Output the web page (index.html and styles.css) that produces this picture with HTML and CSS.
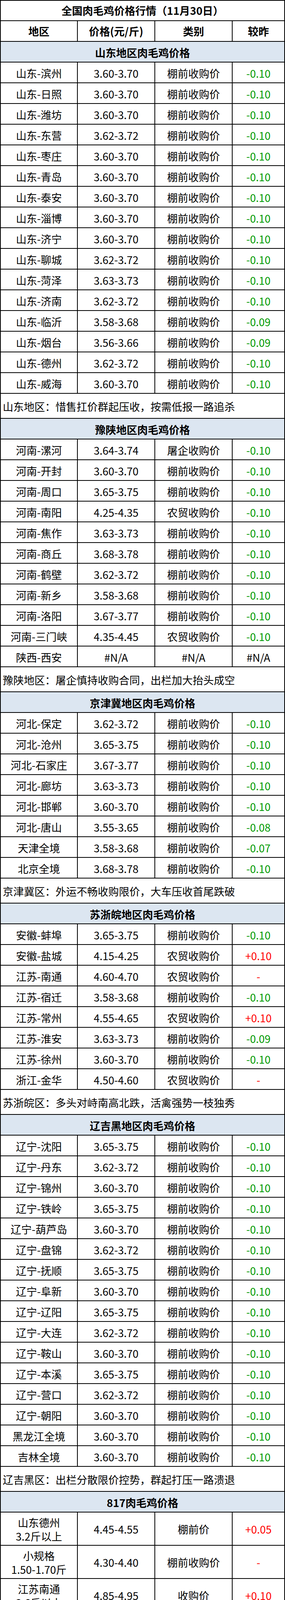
FILE: index.html
```html
<!DOCTYPE html>
<html lang="zh-CN">
<head>
<meta charset="utf-8">
<title>全国肉毛鸡价格行情（11月30日）</title>
<link rel="stylesheet" href="styles.css">
</head>
<body>
<div class="sheet">
  <div class="row full title">全国肉毛鸡价格行情（11月30日）</div>
  <div class="row head"><div class="cell">地区</div><div class="cell">价格(元/斤)</div><div class="cell">类别</div><div class="cell">较昨</div></div>

  <div class="row full section">山东地区肉毛鸡价格</div>
  <div class="row"><div class="cell">山东-滨州</div><div class="cell">3.60-3.70</div><div class="cell">棚前收购价</div><div class="cell dn">-0.10</div></div>
  <div class="row"><div class="cell">山东-日照</div><div class="cell">3.60-3.70</div><div class="cell">棚前收购价</div><div class="cell dn">-0.10</div></div>
  <div class="row"><div class="cell">山东-潍坊</div><div class="cell">3.60-3.70</div><div class="cell">棚前收购价</div><div class="cell dn">-0.10</div></div>
  <div class="row"><div class="cell">山东-东营</div><div class="cell">3.62-3.72</div><div class="cell">棚前收购价</div><div class="cell dn">-0.10</div></div>
  <div class="row"><div class="cell">山东-枣庄</div><div class="cell">3.60-3.70</div><div class="cell">棚前收购价</div><div class="cell dn">-0.10</div></div>
  <div class="row"><div class="cell">山东-青岛</div><div class="cell">3.60-3.70</div><div class="cell">棚前收购价</div><div class="cell dn">-0.10</div></div>
  <div class="row"><div class="cell">山东-泰安</div><div class="cell">3.60-3.70</div><div class="cell">棚前收购价</div><div class="cell dn">-0.10</div></div>
  <div class="row"><div class="cell">山东-淄博</div><div class="cell">3.60-3.70</div><div class="cell">棚前收购价</div><div class="cell dn">-0.10</div></div>
  <div class="row"><div class="cell">山东-济宁</div><div class="cell">3.60-3.70</div><div class="cell">棚前收购价</div><div class="cell dn">-0.10</div></div>
  <div class="row"><div class="cell">山东-聊城</div><div class="cell">3.62-3.72</div><div class="cell">棚前收购价</div><div class="cell dn">-0.10</div></div>
  <div class="row"><div class="cell">山东-菏泽</div><div class="cell">3.63-3.73</div><div class="cell">棚前收购价</div><div class="cell dn">-0.10</div></div>
  <div class="row"><div class="cell">山东-济南</div><div class="cell">3.62-3.72</div><div class="cell">棚前收购价</div><div class="cell dn">-0.10</div></div>
  <div class="row"><div class="cell">山东-临沂</div><div class="cell">3.58-3.68</div><div class="cell">棚前收购价</div><div class="cell dn">-0.09</div></div>
  <div class="row"><div class="cell">山东-烟台</div><div class="cell">3.56-3.66</div><div class="cell">棚前收购价</div><div class="cell dn">-0.09</div></div>
  <div class="row"><div class="cell">山东-德州</div><div class="cell">3.62-3.72</div><div class="cell">棚前收购价</div><div class="cell dn">-0.10</div></div>
  <div class="row"><div class="cell">山东-威海</div><div class="cell">3.60-3.70</div><div class="cell">棚前收购价</div><div class="cell dn">-0.10</div></div>
  <div class="row full note">山东地区：惜售扛价群起压收，按需低报一路追杀</div>

  <div class="row full section">豫陕地区肉毛鸡价格</div>
  <div class="row"><div class="cell">河南-漯河</div><div class="cell">3.64-3.74</div><div class="cell">屠企收购价</div><div class="cell dn">-0.10</div></div>
  <div class="row"><div class="cell">河南-开封</div><div class="cell">3.60-3.70</div><div class="cell">棚前收购价</div><div class="cell dn">-0.10</div></div>
  <div class="row"><div class="cell">河南-周口</div><div class="cell">3.65-3.75</div><div class="cell">棚前收购价</div><div class="cell dn">-0.10</div></div>
  <div class="row"><div class="cell">河南-南阳</div><div class="cell">4.25-4.35</div><div class="cell">农贸收购价</div><div class="cell dn">-0.10</div></div>
  <div class="row"><div class="cell">河南-焦作</div><div class="cell">3.63-3.73</div><div class="cell">棚前收购价</div><div class="cell dn">-0.10</div></div>
  <div class="row"><div class="cell">河南-商丘</div><div class="cell">3.68-3.78</div><div class="cell">棚前收购价</div><div class="cell dn">-0.10</div></div>
  <div class="row"><div class="cell">河南-鹤壁</div><div class="cell">3.62-3.72</div><div class="cell">棚前收购价</div><div class="cell dn">-0.10</div></div>
  <div class="row"><div class="cell">河南-新乡</div><div class="cell">3.58-3.68</div><div class="cell">棚前收购价</div><div class="cell dn">-0.10</div></div>
  <div class="row"><div class="cell">河南-洛阳</div><div class="cell">3.67-3.77</div><div class="cell">棚前收购价</div><div class="cell dn">-0.10</div></div>
  <div class="row"><div class="cell">河南-三门峡</div><div class="cell">4.35-4.45</div><div class="cell">农贸收购价</div><div class="cell dn">-0.10</div></div>
  <div class="row"><div class="cell">陕西-西安</div><div class="cell">#N/A</div><div class="cell">#N/A</div><div class="cell">#N/A</div></div>
  <div class="row full note">豫陕地区：屠企慎持收购合同，出栏加大抬头成空</div>

  <div class="row full section">京津冀地区肉毛鸡价格</div>
  <div class="row"><div class="cell">河北-保定</div><div class="cell">3.62-3.72</div><div class="cell">棚前收购价</div><div class="cell dn">-0.10</div></div>
  <div class="row"><div class="cell">河北-沧州</div><div class="cell">3.65-3.75</div><div class="cell">棚前收购价</div><div class="cell dn">-0.10</div></div>
  <div class="row"><div class="cell">河北-石家庄</div><div class="cell">3.67-3.77</div><div class="cell">棚前收购价</div><div class="cell dn">-0.10</div></div>
  <div class="row"><div class="cell">河北-廊坊</div><div class="cell">3.63-3.73</div><div class="cell">棚前收购价</div><div class="cell dn">-0.10</div></div>
  <div class="row"><div class="cell">河北-邯郸</div><div class="cell">3.60-3.70</div><div class="cell">棚前收购价</div><div class="cell dn">-0.10</div></div>
  <div class="row"><div class="cell">河北-唐山</div><div class="cell">3.55-3.65</div><div class="cell">棚前收购价</div><div class="cell dn">-0.08</div></div>
  <div class="row"><div class="cell">天津全境</div><div class="cell">3.58-3.68</div><div class="cell">棚前收购价</div><div class="cell dn">-0.07</div></div>
  <div class="row"><div class="cell">北京全境</div><div class="cell">3.68-3.78</div><div class="cell">棚前收购价</div><div class="cell dn">-0.10</div></div>
  <div class="row full note">京津冀区：外运不畅收购限价，大车压收首尾跌破</div>

  <div class="row full section">苏浙皖地区肉毛鸡价格</div>
  <div class="row"><div class="cell">安徽-蚌埠</div><div class="cell">3.65-3.75</div><div class="cell">棚前收购价</div><div class="cell dn">-0.10</div></div>
  <div class="row"><div class="cell">安徽-盐城</div><div class="cell">4.15-4.25</div><div class="cell">农贸收购价</div><div class="cell up">+0.10</div></div>
  <div class="row"><div class="cell">江苏-南通</div><div class="cell">4.60-4.70</div><div class="cell">农贸收购价</div><div class="cell up">-</div></div>
  <div class="row"><div class="cell">江苏-宿迁</div><div class="cell">3.58-3.68</div><div class="cell">棚前收购价</div><div class="cell dn">-0.10</div></div>
  <div class="row"><div class="cell">江苏-常州</div><div class="cell">4.55-4.65</div><div class="cell">农贸收购价</div><div class="cell up">+0.10</div></div>
  <div class="row"><div class="cell">江苏-淮安</div><div class="cell">3.63-3.73</div><div class="cell">棚前收购价</div><div class="cell dn">-0.09</div></div>
  <div class="row"><div class="cell">江苏-徐州</div><div class="cell">3.60-3.70</div><div class="cell">棚前收购价</div><div class="cell dn">-0.10</div></div>
  <div class="row"><div class="cell">浙江-金华</div><div class="cell">4.50-4.60</div><div class="cell">农贸收购价</div><div class="cell up">-</div></div>
  <div class="row full note">苏浙皖区：多头对峙南高北跌，活禽强势一枝独秀</div>

  <div class="row full section">辽吉黑地区肉毛鸡价格</div>
  <div class="row"><div class="cell">辽宁-沈阳</div><div class="cell">3.65-3.75</div><div class="cell">棚前收购价</div><div class="cell dn">-0.10</div></div>
  <div class="row"><div class="cell">辽宁-丹东</div><div class="cell">3.62-3.72</div><div class="cell">棚前收购价</div><div class="cell dn">-0.10</div></div>
  <div class="row"><div class="cell">辽宁-锦州</div><div class="cell">3.60-3.70</div><div class="cell">棚前收购价</div><div class="cell dn">-0.10</div></div>
  <div class="row"><div class="cell">辽宁-铁岭</div><div class="cell">3.65-3.75</div><div class="cell">棚前收购价</div><div class="cell dn">-0.10</div></div>
  <div class="row"><div class="cell">辽宁-葫芦岛</div><div class="cell">3.60-3.70</div><div class="cell">棚前收购价</div><div class="cell dn">-0.10</div></div>
  <div class="row"><div class="cell">辽宁-盘锦</div><div class="cell">3.62-3.72</div><div class="cell">棚前收购价</div><div class="cell dn">-0.10</div></div>
  <div class="row"><div class="cell">辽宁-抚顺</div><div class="cell">3.65-3.75</div><div class="cell">棚前收购价</div><div class="cell dn">-0.10</div></div>
  <div class="row"><div class="cell">辽宁-阜新</div><div class="cell">3.60-3.70</div><div class="cell">棚前收购价</div><div class="cell dn">-0.10</div></div>
  <div class="row"><div class="cell">辽宁-辽阳</div><div class="cell">3.65-3.75</div><div class="cell">棚前收购价</div><div class="cell dn">-0.10</div></div>
  <div class="row"><div class="cell">辽宁-大连</div><div class="cell">3.62-3.72</div><div class="cell">棚前收购价</div><div class="cell dn">-0.10</div></div>
  <div class="row"><div class="cell">辽宁-鞍山</div><div class="cell">3.60-3.70</div><div class="cell">棚前收购价</div><div class="cell dn">-0.10</div></div>
  <div class="row"><div class="cell">辽宁-本溪</div><div class="cell">3.65-3.75</div><div class="cell">棚前收购价</div><div class="cell dn">-0.10</div></div>
  <div class="row"><div class="cell">辽宁-营口</div><div class="cell">3.62-3.72</div><div class="cell">棚前收购价</div><div class="cell dn">-0.10</div></div>
  <div class="row"><div class="cell">辽宁-朝阳</div><div class="cell">3.60-3.70</div><div class="cell">棚前收购价</div><div class="cell dn">-0.10</div></div>
  <div class="row"><div class="cell">黑龙江全境</div><div class="cell">3.60-3.70</div><div class="cell">棚前收购价</div><div class="cell dn">-0.10</div></div>
  <div class="row"><div class="cell">吉林全境</div><div class="cell">3.60-3.70</div><div class="cell">棚前收购价</div><div class="cell dn">-0.10</div></div>
  <div class="row full note">辽吉黑区：出栏分散限价控势，群起打压一路溃退</div>

  <div class="row full section">817肉毛鸡价格</div>
  <div class="row tall"><div class="cell two"><span>山东德州</span><span>3.2斤以上</span></div><div class="cell">4.45-4.55</div><div class="cell">棚前价</div><div class="cell up">+0.05</div></div>
  <div class="row tall"><div class="cell two"><span>小规格</span><span>1.50-1.70斤</span></div><div class="cell">4.30-4.40</div><div class="cell">棚前收购价</div><div class="cell up">-</div></div>
  <div class="row tall"><div class="cell two"><span>江苏南通</span><span>3.6斤以上</span></div><div class="cell">4.85-4.95</div><div class="cell">收购价</div><div class="cell up">+0.10</div></div>
  <div class="row tall"><div class="cell two"><span>山东聊城</span><span>2.8-3.2斤</span></div><div class="cell">4.40-4.50</div><div class="cell">棚前收购价</div><div class="cell up">+0.05</div></div>
  <div class="row tall"><div class="cell two"><span>浙江金华</span><span>3.6斤以上</span></div><div class="cell">4.50-4.60</div><div class="cell">农贸收购价</div><div class="cell up">-</div></div>
  <div class="row tall"><div class="cell two"><span>河南濮阳</span><span>3.2-3.5斤</span></div><div class="cell">4.65-4.75</div><div class="cell">棚前收购价</div><div class="cell up">+0.05</div></div>
  <div class="row tall"><div class="cell two"><span>河南新乡</span><span>3.2-3.5斤</span></div><div class="cell">4.55-4.65</div><div class="cell">棚前收购价</div><div class="cell up">-</div></div>
  <div class="row tall"><div class="cell two"><span>河南开封</span><span>3.2-3.5斤</span></div><div class="cell">4.70-4.80</div><div class="cell">棚前收购价</div><div class="cell up">+0.05</div></div>
  <div class="row tall"><div class="cell two"><span>津冀地区</span><span>2.8-3.2斤</span></div><div class="cell">#N/A</div><div class="cell">#N/A</div><div class="cell">#N/A</div></div>
  <div class="row full note">肉杂817鸡市场棚前行情：供不应求，一路向上</div>
</div>
</body>
</html>
```

FILE: styles.css
```css
html, body {
  margin: 0;
  padding: 0;
  background: #ffffff;
}

body {
  font-family: "Noto Sans CJK SC", "Noto Sans", sans-serif;
  color: #000000;
}

.sheet {
  width: 729px;
  box-sizing: border-box;
  border: 2px solid #000000;
  border-bottom: 0;
}

.row {
  display: grid;
  grid-template-columns: 197px 198px 198px 1fr;
  height: 53px;
  overflow: hidden;
  box-sizing: border-box;
  border-bottom: 2px solid #000000;
  font-size: 27px;
  line-height: 36px;
}

.cell {
  display: flex;
  align-items: center;
  justify-content: center;
  box-sizing: border-box;
  min-height: 0;
  padding-top: 4px;
  border-right: 2px solid #000000;
  white-space: nowrap;
}

.cell:last-child {
  border-right: 0;
}

.full {
  display: flex;
  align-items: center;
  justify-content: center;
  padding-top: 4px;
}

.title {
  height: 52px;
  padding-top: 0;
  font-weight: 700;
}

.head {
  font-weight: 700;
}

.head .cell {
  padding-top: 0;
}

.section {
  background: #dce6f1;
  font-weight: 700;
}

.note {
  height: 64px;
  justify-content: flex-start;
  padding: 4px 0 0 5px;
}

.tall {
  height: 85px;
}

.tall .cell {
  padding-top: 3px;
}

.two {
  flex-direction: column;
  line-height: 35px;
}

.dn {
  color: #009a00;
}

.up {
  color: #ff0000;
}
```
